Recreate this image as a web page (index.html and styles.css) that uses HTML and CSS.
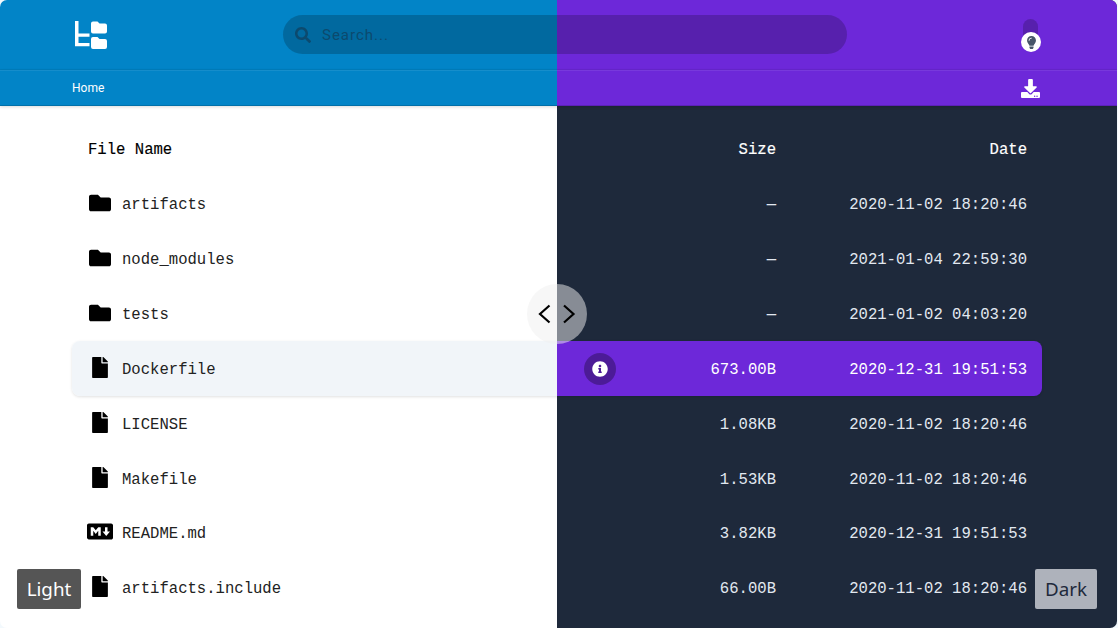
FILE: index.html
```html
<!DOCTYPE html>
<html lang="en">
<head>
  <meta charset="UTF-8" />
  <title>Files</title>
  <meta name="viewport" content="width=device-width, initial-scale=1" />
  <link rel="stylesheet" href="styles.css">
</head>
<body>
  <svg class="sprites" width="0" height="0">
    <symbol id="i-folder" viewBox="0 0 512 512"><path d="M464 128H272l-64-64H48C21.49 64 0 85.49 0 112v288c0 26.51 21.49 48 48 48h416c26.51 0 48-21.49 48-48V176c0-26.51-21.49-48-48-48z"/></symbol>
    <symbol id="i-file" viewBox="0 0 384 512"><path d="M224 136V0H24C10.7 0 0 10.7 0 24v464c0 13.3 10.7 24 24 24h336c13.3 0 24-10.7 24-24V160H248c-13.2 0-24-10.8-24-24zm160-14.1v6.1H256V0h6.1c6.4 0 12.5 2.5 17 7l97.9 98c4.5 4.5 7 10.6 7 16.9z"/></symbol>
    <symbol id="i-markdown" viewBox="0 0 640 512"><path d="M593.8 59.1H46.2C20.7 59.1 0 79.8 0 105.2v301.5c0 25.5 20.7 46.2 46.2 46.2h547.7c25.5 0 46.2-20.7 46.1-46.1V105.2c0-25.4-20.7-46.1-46.2-46.1zM338.5 360.6H277v-120l-61.5 76.9-61.5-76.9v120H92.3V151.4h61.5l61.5 76.9 61.5-76.9h61.5v209.2zm135.3 3.1L381.5 256H443V151.4h61.5V256H566z"/></symbol>
  </svg>

  <div class="app">
    <header class="topbar">
      <svg class="logo" viewBox="0 0 32 28" fill="#fff">
        <path d="M0 0h3.500v12.500h11v3.200h-11v6.300h11v3.200H0z"/>
        <path d="M18 .5h4.500l2 2H30a2 2 0 0 1 2 2v6a2 2 0 0 1-2 2H18a2 2 0 0 1-2-2v-8a2 2 0 0 1 2-2z"/>
        <path d="M18 16h4.500l2 2H30a2 2 0 0 1 2 2v6a2 2 0 0 1-2 2H18a2 2 0 0 1-2-2v-8a2 2 0 0 1 2-2z"/>
      </svg>
      <div class="search">
        <svg class="search-icon" viewBox="0 0 512 512"><path d="M505 442.7L405.3 343c-4.5-4.5-10.6-7-17-7H372c27.6-35.3 44-79.7 44-128C416 93.1 322.9 0 208 0S0 93.1 0 208s93.1 208 208 208c48.3 0 92.7-16.4 128-44v16.3c0 6.4 2.5 12.5 7 17l99.7 99.7c9.4 9.4 24.6 9.4 33.9 0l28.3-28.3c9.4-9.4 9.4-24.6.1-34zM208 336c-70.7 0-128-57.2-128-128 0-70.7 57.2-128 128-128 70.7 0 128 57.2 128 128 0 70.7-57.2 128-128 128z"/></svg>
        <span>Search...</span>
      </div>
      <div class="toggle">
        <div class="knob">
          <svg viewBox="0 0 352 512"><path d="M96.06 454.35c.01 6.29 1.87 12.45 5.36 17.69l17.09 25.69a31.99 31.99 0 0 0 26.64 14.28h61.71a31.99 31.99 0 0 0 26.64-14.28l17.09-25.69a31.989 31.989 0 0 0 5.36-17.69l.04-38.35H96.01l.05 38.35zM0 176c0 44.37 16.45 84.85 43.56 115.78 16.52 18.85 42.36 58.23 52.21 91.45.04.26.07.52.11.78h160.24c.04-.26.07-.51.11-.78 9.85-33.22 35.69-72.6 52.21-91.45C335.55 260.85 352 220.37 352 176 352 78.61 272.91-.3 175.45 0 73.44.31 0 82.97 0 176zm176-80c-44.11 0-80 35.89-80 80 0 8.84-7.16 16-16 16s-16-7.16-16-16c0-61.76 50.24-112 112-112 8.84 0 16 7.16 16 16s-7.16 16-16 16z"/></svg>
        </div>
      </div>
    </header>

    <nav class="crumbs">
      <span>Home</span>
      <svg class="download" viewBox="0 0 512 512"><path d="M216 0h80c13.3 0 24 10.7 24 24v168h87.7c17.8 0 26.7 21.5 14.1 34.1L269.7 378.3c-7.5 7.5-19.8 7.5-27.3 0L90.1 226.1c-12.6-12.6-3.7-34.1 14.1-34.1H192V24c0-13.3 10.7-24 24-24zm296 376v112c0 13.3-10.7 24-24 24H24c-13.3 0-24-10.7-24-24V376c0-13.3 10.7-24 24-24h146.7l49 49c20.1 20.1 52.5 20.1 72.6 0l49-49H488c13.3 0 24 10.7 24 24zm-124 88c0-11-9-20-20-20s-20 9-20 20 9 20 20 20 20-9 20-20zm64 0c0-11-9-20-20-20s-20 9-20 20 9 20 20 20 20-9 20-20z"/></svg>
    </nav>

    <main class="files">
      <div class="row head">
        <div class="name">File Name</div>
        <div></div>
        <div class="size">Size</div>
        <div class="date">Date</div>
      </div>
      <div class="row">
        <div class="name"><span class="icon"><svg class="folder"><use href="#i-folder"/></svg></span>artifacts</div>
        <div></div>
        <div class="size">—</div>
        <div class="date">2020-11-02 18:20:46</div>
      </div>
      <div class="row">
        <div class="name"><span class="icon"><svg class="folder"><use href="#i-folder"/></svg></span>node_modules</div>
        <div></div>
        <div class="size">—</div>
        <div class="date">2021-01-04 22:59:30</div>
      </div>
      <div class="row">
        <div class="name"><span class="icon"><svg class="folder"><use href="#i-folder"/></svg></span>tests</div>
        <div></div>
        <div class="size">—</div>
        <div class="date">2021-01-02 04:03:20</div>
      </div>
      <div class="row active">
        <div class="name"><span class="icon"><svg class="file"><use href="#i-file"/></svg></span>Dockerfile</div>
        <div class="info">
          <svg viewBox="0 0 512 512"><path d="M256 8C119.043 8 8 119.083 8 256c0 136.997 111.043 248 248 248s248-111.003 248-248C504 119.083 392.957 8 256 8zm0 110c23.196 0 42 18.804 42 42s-18.804 42-42 42-42-18.804-42-42 18.804-42 42-42zm56 254c0 6.627-5.373 12-12 12h-88c-6.627 0-12-5.373-12-12v-24c0-6.627 5.373-12 12-12h12v-64h-12c-6.627 0-12-5.373-12-12v-24c0-6.627 5.373-12 12-12h64c6.627 0 12 5.373 12 12v100h12c6.627 0 12 5.373 12 12v24z"/></svg>
        </div>
        <div class="size">673.00B</div>
        <div class="date">2020-12-31 19:51:53</div>
      </div>
      <div class="row">
        <div class="name"><span class="icon"><svg class="file"><use href="#i-file"/></svg></span>LICENSE</div>
        <div></div>
        <div class="size">1.08KB</div>
        <div class="date">2020-11-02 18:20:46</div>
      </div>
      <div class="row">
        <div class="name"><span class="icon"><svg class="file"><use href="#i-file"/></svg></span>Makefile</div>
        <div></div>
        <div class="size">1.53KB</div>
        <div class="date">2020-11-02 18:20:46</div>
      </div>
      <div class="row">
        <div class="name"><span class="icon"><svg class="markdown"><use href="#i-markdown"/></svg></span>README.md</div>
        <div></div>
        <div class="size">3.82KB</div>
        <div class="date">2020-12-31 19:51:53</div>
      </div>
      <div class="row">
        <div class="name"><span class="icon"><svg class="file"><use href="#i-file"/></svg></span>artifacts.include</div>
        <div></div>
        <div class="size">66.00B</div>
        <div class="date">2020-11-02 18:20:46</div>
      </div>
    </main>

    <!-- compare slider bits, these sit on top of the list -->
    <div class="handle">
      <svg viewBox="0 0 60 60" fill="none" stroke="#000" stroke-width="2.2">
        <path d="M22.500 21.500L13 30l9.500 8.500"/>
        <path d="M37 21.500L46.500 30 37 38.500"/>
      </svg>
    </div>
    <div class="tag tag-light">Light</div>
    <div class="tag tag-dark">Dark</div>
  </div>
</body>
</html>
```

FILE: styles.css
```css
:root {
  --split: 557px;
  --blue: #0284c7;
  --violet: #6d28d9;
  --slate: #1e293b;
}
html, body {
  margin: 0;
  height: 100%;
  background: #f3f9fd;
}
.sprites { position: absolute; }
.app {
  position: relative;
  width: 1117px;
  height: 628px;
  overflow: hidden;
  border-radius: 7px;
  font-family: 'Liberation Mono', monospace;
  background: linear-gradient(to right, #fff var(--split), var(--slate) var(--split));
}

/* top bars, the colour changes at the split */
.topbar, .crumbs {
  display: flex;
  align-items: center;
  background: linear-gradient(to right, var(--blue) var(--split), var(--violet) var(--split));
}
.topbar {
  height: 70px;
  padding-left: 75px;
  border-bottom: 1px solid rgba(0, 0, 0, 0.05);
  box-sizing: border-box;
}
.logo {
  width: 32px;
  height: 28px;
  margin-right: 176px;
}
.search {
  width: 564px;
  height: 39px;
  box-sizing: border-box;
  padding-left: 12px;
  display: flex;
  align-items: center;
  gap: 11px;
  border-radius: 20px;
  background: rgba(0, 0, 0, 0.2);
  font-family: 'Roboto', sans-serif;
  font-size: 15px;
  letter-spacing: 1px;
  color: #0c4a6e;
}
.search-icon {
  width: 16px;
  height: 16px;
  fill: #0c4a6e;
}
.toggle {
  position: relative;
  width: 15px;
  height: 26px;
  margin-left: auto;
  margin-right: 79px;
  margin-top: -5px;
  border-radius: 8px;
  background: rgba(0, 0, 0, 0.2);
}
.knob {
  position: absolute;
  top: 13px;
  left: -2px;
  width: 20px;
  height: 20px;
  border-radius: 50%;
  background: #fff;
  display: flex;
  align-items: center;
  justify-content: center;
}
.knob svg {
  width: 9px;
  height: 13px;
  fill: #475569;
}
.crumbs {
  height: 36px;
  padding: 0 77px 0 72px;
  justify-content: space-between;
  border-top: 1px solid rgba(255, 255, 255, 0.08);
  border-bottom: 1px solid rgba(0, 0, 0, 0.15);
  box-sizing: border-box;
  box-shadow: 0 1px 3px rgba(0, 0, 0, 0.15);
  font-family: 'Roboto', sans-serif;
  font-size: 12px;
  color: #fff;
}
.download {
  width: 19px;
  height: 19px;
  fill: #fff;
}

/* file list */
.files {
  margin: 0 75px 0 72px;
  padding-top: 16px;
  font-size: 15.6px;
}
.row {
  display: grid;
  grid-template-columns: 1fr 32px 160px 251px;
  align-items: center;
  height: 54.86px;
  padding: 0 15px;
  box-sizing: border-box;
}
.name {
  display: flex;
  align-items: center;
  padding-top: 2px;
  color: #222;
}
.icon {
  display: flex;
  justify-content: center;
  align-items: center;
  width: 26px;
  margin-right: 9px;
  margin-top: -5px;
}
.icon svg { fill: #000; }
.folder { width: 22px; height: 22px; }
.file { width: 16px; height: 21px; }
.markdown { width: 26px; height: 21px; }
.size, .date {
  padding-top: 2px;
  text-align: right;
  color: #e2e8f0;
}
.head .name { color: #000; -webkit-text-stroke: 0.15px #000; padding-left: 1px; }
.head .size, .head .date { color: #fff; -webkit-text-stroke: 0.15px #fff; }
.active {
  border-radius: 8px;
  background: linear-gradient(to right, #f1f5f9 485px, var(--violet) 485px);
  box-shadow: 0 1px 3px rgba(0, 0, 0, 0.12);
}
.active .size, .active .date { color: #fff; }
.info {
  width: 32px;
  height: 32px;
  border-radius: 50%;
  background: rgba(0, 0, 0, 0.3);
  display: flex;
  align-items: center;
  justify-content: center;
}
.info svg {
  width: 16px;
  height: 16px;
  fill: #fff;
}

/* compare slider */
.handle {
  position: absolute;
  top: 284px;
  left: 527px;
  width: 60px;
  height: 60px;
  border-radius: 50%;
  background: rgba(240, 240, 240, 0.5);
}
.handle svg {
  display: block;
  width: 60px;
  height: 60px;
}
.tag {
  position: absolute;
  top: 569px;
  height: 40px;
  line-height: 40px;
  text-align: center;
  border-radius: 2px;
  font-family: 'Noto Sans', sans-serif;
  font-size: 18.8px;
}
.tag-light {
  left: 17px;
  width: 64px;
  background: #555;
  color: #fff;
}
.tag-dark {
  left: 1035px;
  width: 62px;
  background: #aeb2bb;
  color: var(--slate);
}
```
